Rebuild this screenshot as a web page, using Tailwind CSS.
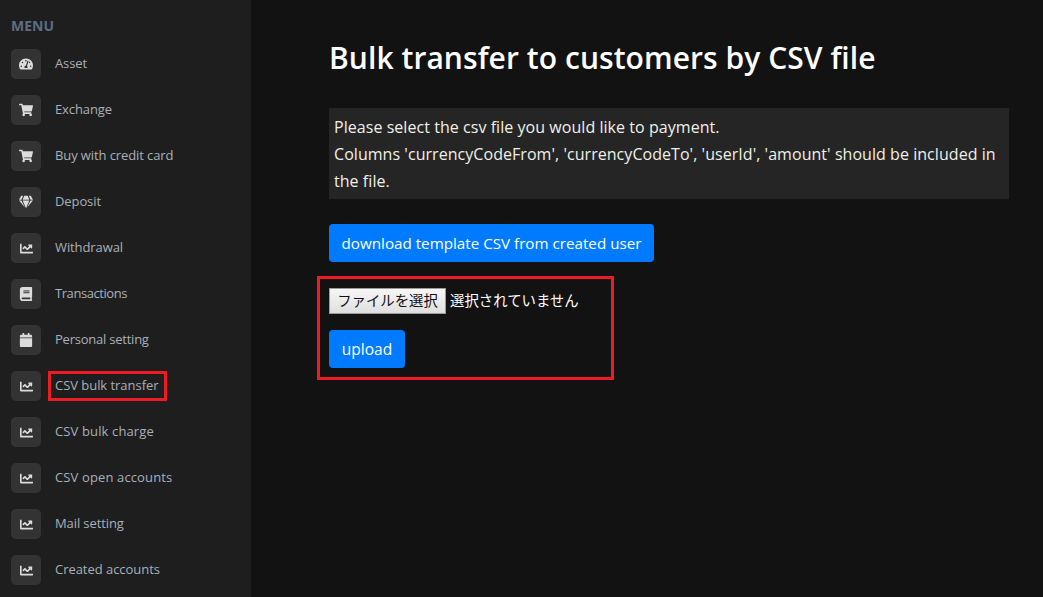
<!DOCTYPE html>
<html lang="en">
<head>
  <meta charset="UTF-8">
  <meta name="viewport" content="width=device-width, initial-scale=1.0">
  <title>Bulk transfer</title>
  <script src="https://cdn.jsdelivr.net/npm/@tailwindcss/browser@4"></script>
</head>
<body class="bg-[#121212] font-['Open_Sans','Noto_Sans_CJK_JP',sans-serif]">
  <svg class="hidden">
    <symbol id="i-gauge" viewBox="0 0 576 512"><path fill="currentColor" d="M288 32C128.94 32 0 160.94 0 320c0 52.8 14.25 102.26 39.06 144.8 5.61 9.62 16.3 15.2 27.44 15.2h443c11.14 0 21.83-5.58 27.44-15.2C561.75 422.26 576 372.8 576 320c0-159.06-128.94-288-288-288zm0 64c14.71 0 26.58 10.13 30.32 23.65-1.11 2.26-2.64 4.23-3.45 6.67l-9.22 27.67c-5.13 3.49-10.97 6.01-17.64 6.01-17.67 0-32-14.33-32-32S270.33 96 288 96zM96 384c-17.67 0-32-14.33-32-32s14.33-32 32-32 32 14.33 32 32-14.33 32-32 32zm48-160c-17.67 0-32-14.33-32-32s14.33-32 32-32 32 14.33 32 32-14.33 32-32 32zm246.77-72.41l-61.33 184C343.13 347.33 352 364.54 352 384c0 11.72-3.38 22.55-8.88 32H232.88c-5.5-9.45-8.88-20.28-8.88-32 0-33.94 26.5-61.43 59.9-63.59l61.34-184.01c4.17-12.56 17.73-19.45 30.36-15.17 12.57 4.19 19.35 17.79 15.17 30.36zm14.66 57.2l15.52-46.55c3.47-1.29 7.13-2.23 11.05-2.23 17.67 0 32 14.33 32 32s-14.33 32-32 32c-11.38-.01-20.89-6.28-26.57-15.22zM480 384c-17.67 0-32-14.33-32-32s14.33-32 32-32 32 14.33 32 32-14.33 32-32 32z"/></symbol>
    <symbol id="i-cart" viewBox="0 0 576 512"><path fill="currentColor" d="M528.12 301.319l47.273-208C578.806 78.301 567.391 64 551.99 64H159.208l-9.166-44.81C147.758 8.021 137.93 0 126.529 0H24C10.745 0 0 10.745 0 24v16c0 13.255 10.745 24 24 24h69.883l70.248 343.435C147.325 417.1 136 435.222 136 456c0 30.928 25.072 56 56 56s56-25.072 56-56c0-15.674-6.447-29.835-16.824-40h209.647C430.447 426.165 424 440.326 424 456c0 30.928 25.072 56 56 56s56-25.072 56-56c0-22.172-12.888-41.332-31.579-50.405l5.517-24.276c3.413-15.018-8.002-29.319-23.403-29.319H218.117l-6.545-32h293.145c11.206 0 20.92-7.754 23.403-18.681z"/></symbol>
    <symbol id="i-gem" viewBox="0 0 576 512"><path fill="currentColor" d="M485.5 0L576 160H474.9L405.7 0h79.8zm-128 0l69.2 160H149.3L218.5 0h139zm-267 0h79.8l-69.2 160H0L90.5 0zM0 192h100.7l123 251.7c1.5 3.1-2.7 5.9-5 3.3L0 192zm148.2 0h279.6l-137 318.2c-1 2.4-4.5 2.4-5.5 0L148.2 192zm204.1 251.7l123-251.7H576L357.3 446.9c-2.3 2.7-6.5-.1-5-3.2z"/></symbol>
    <symbol id="i-chart" viewBox="0 0 512 512"><path fill="currentColor" d="M496 384H64V80c0-8.84-7.16-16-16-16H16C7.16 64 0 71.16 0 80v336c0 17.67 14.33 32 32 32h464c8.84 0 16-7.16 16-16v-32c0-8.84-7.16-16-16-16zM464 96H345.94c-21.38 0-32.09 25.85-16.97 40.97l32.4 32.4L288 242.75l-73.37-73.37c-12.5-12.5-32.76-12.5-45.25 0l-68.69 68.69c-6.25 6.25-6.25 16.38 0 22.63l22.62 22.62c6.25 6.25 16.38 6.25 22.63 0L192 237.25l73.37 73.37c12.5 12.5 32.76 12.5 45.25 0l96-96 32.4 32.4c15.12 15.12 40.97 4.41 40.97-16.97V112c.01-8.84-7.15-16-16-16z"/></symbol>
    <symbol id="i-book" viewBox="0 0 448 512"><path fill="currentColor" d="M448 360V24c0-13.3-10.7-24-24-24H96C43 0 0 43 0 96v320c0 53 43 96 96 96h328c13.3 0 24-10.7 24-24v-16c0-7.5-3.5-14.3-8.9-18.7-4.2-15.4-4.2-59.3 0-74.7 5.4-4.3 8.9-11.1 8.9-18.6zM128 134c0-3.3 2.7-6 6-6h212c3.3 0 6 2.7 6 6v20c0 3.3-2.7 6-6 6H134c-3.3 0-6-2.7-6-6v-20zm0 64c0-3.3 2.7-6 6-6h212c3.3 0 6 2.7 6 6v20c0 3.3-2.7 6-6 6H134c-3.3 0-6-2.7-6-6v-20zm253.4 250H96c-17.7 0-32-14.3-32-32 0-17.6 14.4-32 32-32h285.4c-1.9 17.1-1.9 46.9 0 64z"/></symbol>
    <symbol id="i-calendar" viewBox="0 0 448 512"><path fill="currentColor" d="M12 192h424c6.6 0 12 5.4 12 12v260c0 26.5-21.5 48-48 48H48c-26.5 0-48-21.5-48-48V204c0-6.6 5.4-12 12-12zm436-44v-36c0-26.5-21.5-48-48-48h-48V12c0-6.6-5.4-12-12-12h-40c-6.6 0-12 5.4-12 12v52H160V12c0-6.6-5.4-12-12-12h-40c-6.6 0-12 5.4-12 12v52H48C21.5 64 0 85.5 0 112v36c0 6.6 5.4 12 12 12h424c6.6 0 12-5.4 12-12z"/></symbol>
  </svg>

  <div class="flex h-[597px] w-[1043px] overflow-hidden">
    <!-- Sidebar -->
    <aside class="w-[251px] shrink-0 bg-[#1e1e1e] pl-[11px] pt-[17px]">
      <div class="h-[32px] text-[14px] leading-[18px] font-bold text-[#5d6d85]">MENU</div>
      <ul class="flex flex-col gap-[16px] text-[13px] tracking-[-0.1px] text-[#a9b0ba]">
        <li class="flex h-[30px] items-center gap-[14px]"><span class="flex size-[30px] items-center justify-center rounded-[5px] bg-[#333333] text-[#dcdcdc]"><svg class="size-[14px]"><use href="#i-gauge"/></svg></span><span>Asset</span></li>
        <li class="flex h-[30px] items-center gap-[14px]"><span class="flex size-[30px] items-center justify-center rounded-[5px] bg-[#333333] text-[#dcdcdc]"><svg class="size-[14px]"><use href="#i-cart"/></svg></span><span>Exchange</span></li>
        <li class="flex h-[30px] items-center gap-[14px]"><span class="flex size-[30px] items-center justify-center rounded-[5px] bg-[#333333] text-[#dcdcdc]"><svg class="size-[14px]"><use href="#i-cart"/></svg></span><span>Buy with credit card</span></li>
        <li class="flex h-[30px] items-center gap-[14px]"><span class="flex size-[30px] items-center justify-center rounded-[5px] bg-[#333333] text-[#dcdcdc]"><svg class="size-[14px]"><use href="#i-gem"/></svg></span><span>Deposit</span></li>
        <li class="flex h-[30px] items-center gap-[14px]"><span class="flex size-[30px] items-center justify-center rounded-[5px] bg-[#333333] text-[#dcdcdc]"><svg class="size-[13px]"><use href="#i-chart"/></svg></span><span>Withdrawal</span></li>
        <li class="flex h-[30px] items-center gap-[14px]"><span class="flex size-[30px] items-center justify-center rounded-[5px] bg-[#333333] text-[#dcdcdc]"><svg class="size-[14px]"><use href="#i-book"/></svg></span><span class="tracking-[-0.43px]">Transactions</span></li>
        <li class="flex h-[30px] items-center gap-[14px]"><span class="flex size-[30px] items-center justify-center rounded-[5px] bg-[#333333] text-[#dcdcdc]"><svg class="size-[14px]"><use href="#i-calendar"/></svg></span><span class="tracking-[-0.23px]">Personal setting</span></li>
        <li class="flex h-[30px] items-center gap-[14px]"><span class="flex size-[30px] items-center justify-center rounded-[5px] bg-[#333333] text-[#dcdcdc]"><svg class="size-[13px]"><use href="#i-chart"/></svg></span><span class="-ml-[7px] w-[119px] border-[3px] border-[#ed1c24] pb-[2px] pl-[4px] leading-[22px] whitespace-nowrap tracking-[-0.04px]">CSV bulk transfer</span></li>
        <li class="flex h-[30px] items-center gap-[14px]"><span class="flex size-[30px] items-center justify-center rounded-[5px] bg-[#333333] text-[#dcdcdc]"><svg class="size-[13px]"><use href="#i-chart"/></svg></span><span class="tracking-[0.13px]">CSV bulk charge</span></li>
        <li class="flex h-[30px] items-center gap-[14px]"><span class="flex size-[30px] items-center justify-center rounded-[5px] bg-[#333333] text-[#dcdcdc]"><svg class="size-[13px]"><use href="#i-chart"/></svg></span><span class="tracking-[0.13px]">CSV open accounts</span></li>
        <li class="flex h-[30px] items-center gap-[14px]"><span class="flex size-[30px] items-center justify-center rounded-[5px] bg-[#333333] text-[#dcdcdc]"><svg class="size-[13px]"><use href="#i-chart"/></svg></span><span>Mail setting</span></li>
        <li class="flex h-[30px] items-center gap-[14px]"><span class="flex size-[30px] items-center justify-center rounded-[5px] bg-[#333333] text-[#dcdcdc]"><svg class="size-[13px]"><use href="#i-chart"/></svg></span><span class="tracking-[-0.04px]">Created accounts</span></li>
      </ul>
    </aside>

    <!-- Main -->
    <main class="w-[758px] pl-[78px] pt-[38px] text-white">
      <h1 class="h-[70px] text-[30px] leading-[40px] font-semibold tracking-[0.06px]">Bulk transfer to customers by CSV file</h1>
      <p class="w-[680px] bg-[#252525] pt-[6px] pb-[4px] pl-[5px] text-[16px] leading-[27px] tracking-[0.05px] text-[#f0f0e8]">Please select the csv file you would like to payment.<br>Columns 'currencyCodeFrom', 'currencyCodeTo', 'userId', 'amount' should be included in the file.</p>
      <button class="mt-[25px] block h-[38px] w-[325px] rounded-[4px] bg-[#007bff] text-[15.2px] whitespace-nowrap text-white">download template CSV from created user</button>
      <form class="mt-[14px] -ml-[12px] h-[104px] w-[297px] border-[3px] border-[#ed1c24] pl-[9px] pt-[9px]">
        <div class="flex items-center gap-[4px] text-[14.4px]">
          <button type="button" class="h-[26px] w-[117px] border border-[#9a9a9a] bg-linear-to-b from-[#f7f7f7] to-[#dfdfdf] pb-[1px] text-[#111111]">ファイルを選択</button>
          <span class="-mt-[1px]">選択されていません</span>
        </div>
        <button type="button" class="mt-[16px] block h-[38px] w-[76px] rounded-[4px] bg-[#007bff] pt-[1px] text-[15.5px] text-white">upload</button>
      </form>
    </main>
  </div>
</body>
</html>
